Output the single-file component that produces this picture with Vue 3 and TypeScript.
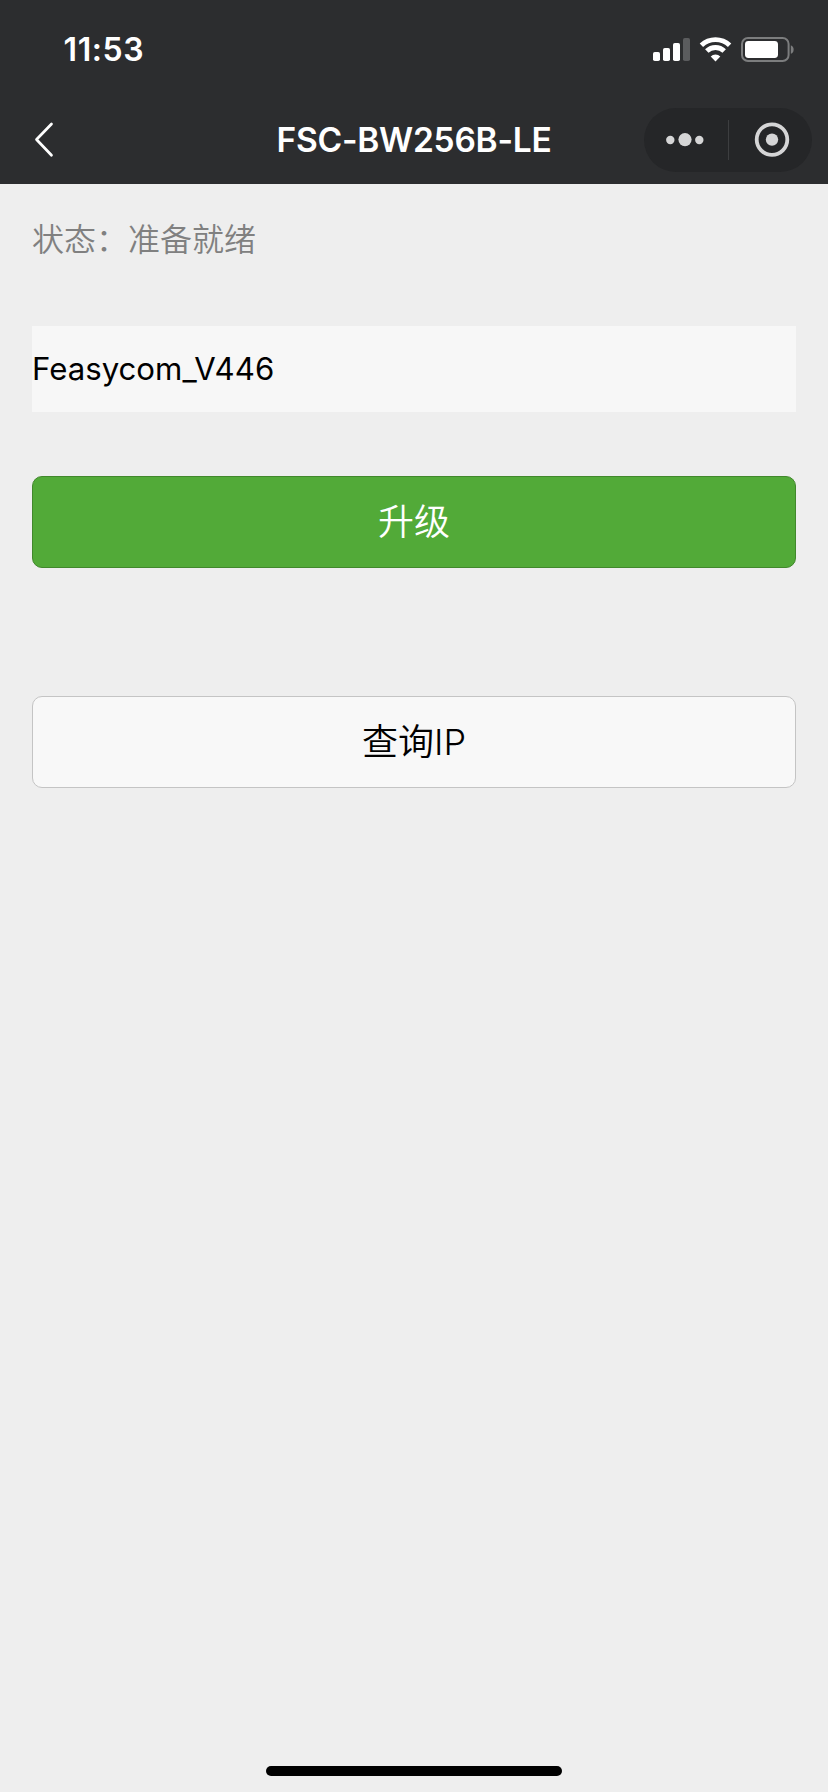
<script setup lang="ts">
import { ref } from 'vue'

const time = '11:53'
const title = 'FSC-BW256B-LE'
const status = ref('准备就绪')
const fileName = ref('Feasycom_V446')
</script>

<template>
  <div class="screen">
    <header class="top">
      <div class="status-bar">
        <span class="time">{{ time }}</span>
        <svg class="indicators" width="144" height="28" viewBox="0 0 144 28">
          <g fill="#fff">
            <rect x="1" y="16" width="7" height="9" rx="1.8" />
            <rect x="11" y="12" width="7" height="13" rx="1.8" />
            <rect x="21" y="7" width="7" height="18" rx="1.8" />
            <rect x="31" y="2" width="7" height="23" rx="1.8" fill="#5b5c5e" />
          </g>
          <g fill="none" stroke="#fff" stroke-width="4.9">
            <path d="M49.4 9.3a20.4 20.4 0 0 1 28.2 0" />
            <path d="M54.8 15.1a12.4 12.4 0 0 1 17.4 0" />
          </g>
          <path d="M63.5 25.4l-4.8-4.9a6.8 6.8 0 0 1 9.6 0z" fill="#fff" />
          <rect x="90" y="2" width="46.6" height="23" rx="6" fill="none" stroke="#7c7d7e" stroke-width="2" />
          <rect x="93" y="5" width="33" height="17" rx="3.4" fill="#fff" />
          <path d="M138.8 9.2c3.8 1.3 3.8 7.3 0 8.6z" fill="#7c7d7e" />
        </svg>
      </div>
      <nav class="nav-bar">
        <svg class="back" width="22" height="38" viewBox="0 0 22 38">
          <path d="M18.5 3L3.5 18.5L18.5 34.3" fill="none" stroke="#fff" stroke-width="2.7" stroke-linecap="round" stroke-linejoin="round" />
        </svg>
        <h1 class="title">{{ title }}</h1>
        <div class="capsule">
          <svg width="168" height="64" viewBox="0 0 168 64">
            <g fill="#d5d5d6">
              <circle cx="26.3" cy="32" r="4.2" />
              <circle cx="41" cy="31.6" r="6.6" />
              <circle cx="55.3" cy="32" r="4.2" />
              <circle cx="128" cy="31.6" r="6.2" />
            </g>
            <path d="M84.5 12V52" stroke="#3d3e40" stroke-width="1" />
            <circle cx="128" cy="31.6" r="15.3" fill="none" stroke="#d5d5d6" stroke-width="3.8" />
          </svg>
        </div>
      </nav>
    </header>
    <main class="content">
      <p class="state">状态：{{ status }}</p>
      <input v-model="fileName" class="file" type="text" />
      <button class="btn primary" type="button">升级</button>
      <button class="btn plain" type="button">查询<span class="latin">IP</span></button>
    </main>
    <div class="home-indicator"></div>
  </div>
</template>

<style>
body {
  margin: 0;
  background: #eee;
}
</style>

<style scoped>
.screen {
  display: flex;
  flex-direction: column;
  width: 828px;
  height: 1792px;
  overflow: hidden;
  box-sizing: border-box;
  background: #eee;
  font-family: Inter, "Noto Sans CJK SC", sans-serif;
}
.top {
  height: 184px;
  flex: none;
  background: #2c2d2f;
  color: #fff;
}
.status-bar {
  display: flex;
  align-items: flex-start;
  justify-content: space-between;
  box-sizing: border-box;
  height: 96px;
  padding: 30px 32px 0 63.5px;
}
.time {
  font-size: 32px;
  line-height: 40px;
  font-weight: 600;
  letter-spacing: 0.6px;
}
.indicators {
  margin-top: 6px;
}
.nav-bar {
  display: grid;
  grid-template-columns: 184px 1fr 184px;
  align-items: center;
  height: 88px;
}
.back {
  margin-left: 33px;
}
.title {
  margin: 0;
  text-align: center;
  font-size: 33.5px;
  line-height: 40px;
  font-weight: 600;
  letter-spacing: -0.25px;
  white-space: nowrap;
}
.capsule {
  width: 168px;
  height: 64px;
  border-radius: 32px;
  background: #252628;
}
.capsule svg {
  display: block;
}
.content {
  display: flex;
  flex-direction: column;
  flex: 1;
  padding: 0 32px;
}
.state {
  margin: 29px 0 0;
  height: 48px;
  line-height: 48px;
  font-size: 32px;
  font-family: "Noto Sans CJK SC", sans-serif;
  font-weight: 350;
  color: #808080;
}
.file {
  box-sizing: border-box;
  height: 86px;
  margin: 65px 0 0;
  padding: 0;
  border: 0;
  outline: 0;
  border-radius: 0;
  background: #f7f7f7;
  color: #000;
  font: 400 31.2px/40px Inter, sans-serif;
}
.btn {
  box-sizing: border-box;
  height: 92px;
  padding: 0 0 6px;
  border-radius: 10px;
  font: 350 36px/84px "Noto Sans CJK SC", sans-serif;
}
.primary {
  margin-top: 64px;
  border: 1px solid #41882c;
  background: #52aa38;
  color: #fff;
}
.plain {
  margin-top: 128px;
  border: 1px solid #c4c4c4;
  background: #f8f8f8;
  color: #000;
}
.latin {
  font-family: Inter, sans-serif;
}
.home-indicator {
  flex: none;
  width: 296px;
  height: 10px;
  margin: 0 auto 16px;
  border-radius: 5px;
  background: #000;
}
</style>
